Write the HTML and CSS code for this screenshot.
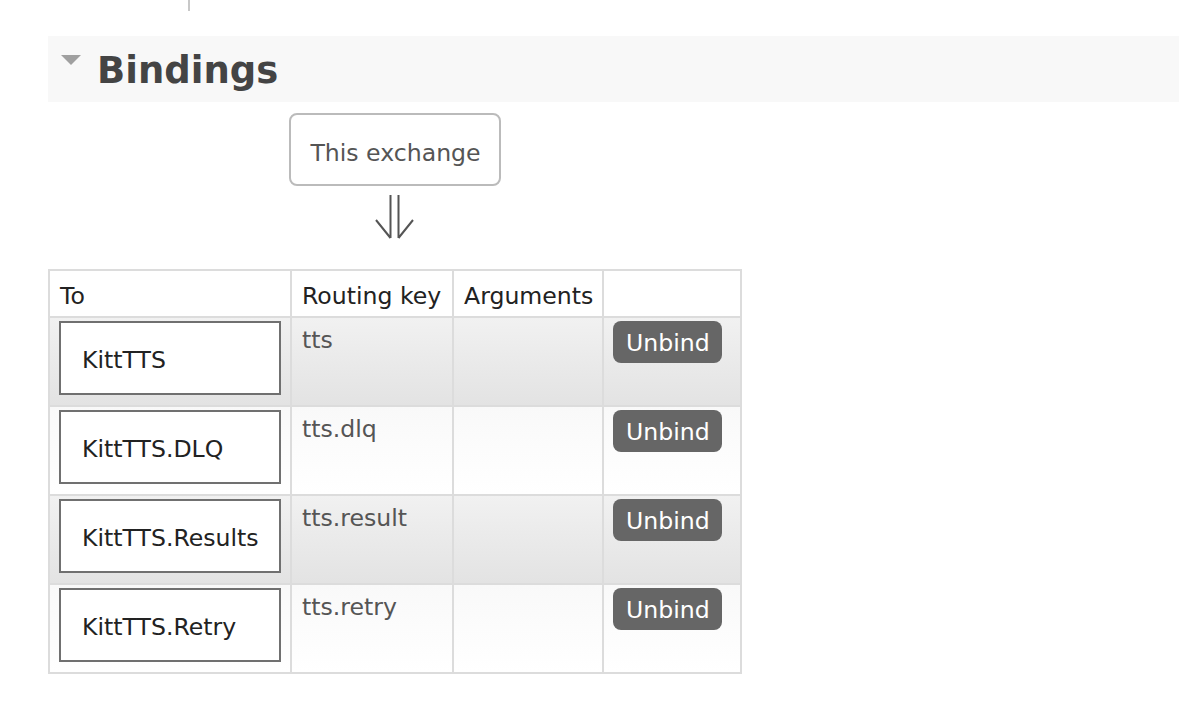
FILE: index.html
```html
<!DOCTYPE html>
<html>
<head>
<meta charset="utf-8">
<link rel="stylesheet" href="styles.css">
</head>
<body>
<div class="main">
  <div class="stub"></div>
  <div class="section-head">
    <span class="toggle"></span>
    <h2>Bindings</h2>
  </div>
  <div class="bindings-wrapper">
    <div class="this-exchange">This exchange</div>
    <svg class="arrow" width="40" height="46" viewBox="0 0 40 46">
      <path d="M15.5 1 V44 M23.5 1 V44 M1 26 L15.5 44 M38 26 L23.5 44" fill="none" stroke="#555" stroke-width="2"/>
    </svg>
    <table class="list">
      <colgroup>
        <col class="c1"><col class="c2"><col class="c3"><col class="c4">
      </colgroup>
      <thead>
        <tr><th>To</th><th>Routing key</th><th>Arguments</th><th></th></tr>
      </thead>
      <tbody>
        <tr class="alt1">
          <td class="to"><span class="queue">KittTTS</span></td>
          <td class="key">tts</td>
          <td></td>
          <td class="act"><span class="btn">Unbind</span></td>
        </tr>
        <tr class="alt2">
          <td class="to"><span class="queue">KittTTS.DLQ</span></td>
          <td class="key">tts.dlq</td>
          <td></td>
          <td class="act"><span class="btn">Unbind</span></td>
        </tr>
        <tr class="alt1">
          <td class="to"><span class="queue">KittTTS.Results</span></td>
          <td class="key">tts.result</td>
          <td></td>
          <td class="act"><span class="btn">Unbind</span></td>
        </tr>
        <tr class="alt2">
          <td class="to"><span class="queue">KittTTS.Retry</span></td>
          <td class="key">tts.retry</td>
          <td></td>
          <td class="act"><span class="btn">Unbind</span></td>
        </tr>
      </tbody>
    </table>
  </div>
</div>
</body>
</html>
```

FILE: styles.css
```css
html, body {
  margin: 0;
  padding: 0;
  background: #fff;
}
body {
  font-family: "DejaVu Sans", Verdana, sans-serif;
  font-size: 23.6px;
  line-height: 28px;
  color: #222;
}
.main {
  padding-left: 48px;
}
.stub {
  margin-left: 140px;
  width: 2px;
  height: 11px;
  background: #c8c8c8;
}
.section-head {
  margin-top: 25px;
  height: 66px;
  background: #f8f8f8;
  display: flex;
  align-items: flex-start;
  padding-left: 13px;
}
.toggle {
  margin-top: 19px;
  width: 0;
  height: 0;
  border-left: 10px solid transparent;
  border-right: 10px solid transparent;
  border-top: 10px solid #a0a0a0;
  margin-right: 16px;
}
.section-head h2 {
  margin: 0;
  padding-top: 3px;
  font-size: 37px;
  line-height: 63px;
  font-weight: bold;
  color: #444;
}
.bindings-wrapper {
  display: inline-flex;
  flex-direction: column;
  align-items: center;
  margin-top: 11px;
}
.this-exchange {
  border: 2px solid #bbb;
  border-radius: 8px;
  padding: 24px 18px 17px 19px;
  color: #555;
}
.arrow {
  display: block;
  margin-top: 8px;
  margin-bottom: 29px;
}
table.list {
  border-collapse: collapse;
  table-layout: fixed;
  width: 692px;
}
col.c1 { width: 242px; }
col.c2 { width: 162px; }
col.c3 { width: 150px; }
col.c4 { width: 138px; }
table.list th,
table.list td {
  border: 2px solid #dcdcdc;
  text-align: left;
  vertical-align: top;
}
table.list th {
  font-weight: normal;
  color: #222;
  padding: 11px 9px 6px 10px;
  background: #fff;
  white-space: nowrap;
}
table.list td {
  padding: 3px 9px 10px 9px;
}
table.list tr.alt1 td {
  background: linear-gradient(#f1f1f1, #e3e3e3);
}
table.list tr.alt2 td {
  background: linear-gradient(#f9f9f9, #ffffff);
}
table.list td.key {
  color: #555;
  padding-top: 8px;
  padding-bottom: 5px;
  padding-left: 10px;
}
.queue {
  display: block;
  background: #fff;
  border: 2px solid #707070;
  padding: 23px 10px 19px 21px;
  color: #222;
  white-space: nowrap;
}
.btn {
  display: inline-block;
  background: #666;
  color: #fff;
  border-radius: 8px;
  padding: 8px 12px 6px 13px;
}
```
